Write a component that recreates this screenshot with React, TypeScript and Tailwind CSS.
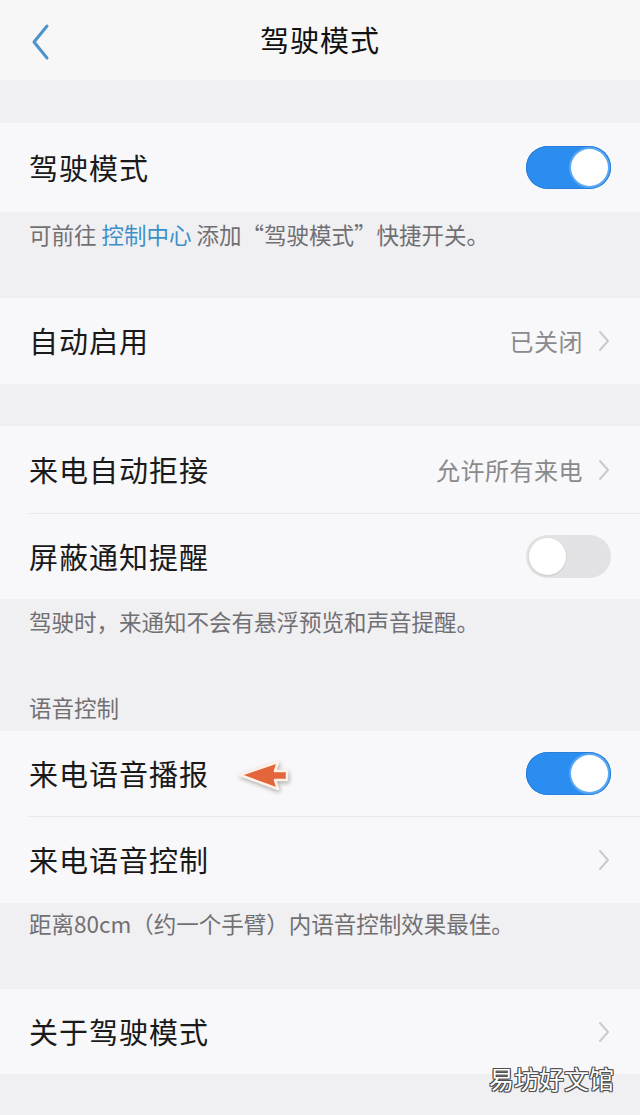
import React from 'react'

const font = { fontFamily: '"Noto Sans CJK SC", "Noto Sans", sans-serif' }

function Toggle({ on }: { on: boolean }) {
  return on ? (
    <div className="w-[85px] h-[43px] rounded-full bg-[#2c8df0] flex items-center justify-end pr-[3px] shadow-[inset_0_0_0_1px_#2a7fd6]">
      <div className="w-[37px] h-[37px] rounded-full bg-white shadow-[0_0_0_2px_#5aa8f2]" />
    </div>
  ) : (
    <div className="w-[85px] h-[43px] rounded-full bg-[#e2e2e4] flex items-center justify-start pl-[3px]">
      <div className="w-[37px] h-[37px] rounded-full bg-white shadow-[0_1px_2px_rgba(0,0,0,0.12)]" />
    </div>
  )
}

function Chevron() {
  return (
    <svg width="14" height="24" viewBox="0 0 14 24" className="ml-[14px]">
      <path d="M3 3 L11 12 L3 21" fill="none" stroke="#cacacc" strokeWidth="2" strokeLinecap="round" strokeLinejoin="round" />
    </svg>
  )
}

function Row({
  label,
  h,
  value,
  chevron,
  toggle,
  children,
}: {
  label: string
  h: string
  value?: string
  chevron?: boolean
  toggle?: boolean
  children?: React.ReactNode
}) {
  return (
    <div className={`relative flex items-center justify-between pl-[29px] pr-[29px] bg-[#f8f7f9] ${h}`}>
      <div className="flex items-center">
        <span className="text-[29px] text-[#1a1a1a] tracking-[1px]">{label}</span>
        {children}
      </div>
      <div className="flex items-center">
        {value && <span className="text-[24px] text-[#8a8a8c] tracking-[0.5px]">{value}</span>}
        {chevron && <Chevron />}
        {toggle !== undefined && <Toggle on={toggle} />}
      </div>
    </div>
  )
}

function Divider() {
  return (
    <div className="bg-[#f8f7f9] pl-[29px]">
      <div className="h-px bg-[#e8e8ea]" />
    </div>
  )
}

// red annotation arrow drawn over the screenshot
function Arrow() {
  return (
    <svg width="56" height="36" viewBox="0 0 56 36" className="ml-[28px] mt-[4px] drop-shadow-[1px_2px_2px_rgba(0,0,0,0.3)]">
      <path
        d="M3 17 L41 4 L38 13 L50 13 L50 22 L38 22 L41 31 Z"
        fill="#e3653c"
        stroke="#fff1e8"
        strokeWidth="2.5"
        strokeLinejoin="round"
      />
    </svg>
  )
}

export default function App() {
  return (
    <div className="relative w-[640px] h-[1115px] bg-[#f0eff2] overflow-hidden" style={font}>
      {/* header */}
      <div className="relative h-[80px] bg-[#f7f7f7] flex items-center justify-center">
        <svg width="24" height="40" viewBox="0 0 24 40" className="absolute left-[28px] top-[22px]">
          <path d="M19 4 L6 20 L19 36" fill="none" stroke="#4b95cc" strokeWidth="3" strokeLinecap="round" strokeLinejoin="round" />
        </svg>
        <span className="text-[29px] text-[#111] tracking-[1px]">驾驶模式</span>
      </div>

      <div className="h-[43px]" />

      <Row label="驾驶模式" h="h-[89px]" toggle={true} />
      <div className="h-[86px] pl-[29px] pt-[6px] text-[22.5px] text-[#707072]">
        可前往 <span className="text-[#3d8fc8]">控制中心</span> 添加“驾驶模式”快捷开关。
      </div>

      <Row label="自动启用" h="h-[86px]" value="已关闭" chevron />

      <div className="h-[42px]" />

      <Row label="来电自动拒接" h="h-[87px]" value="允许所有来电" chevron />
      <Divider />
      <Row label="屏蔽通知提醒" h="h-[85px]" toggle={false} />
      <div className="h-[62px] pl-[29px] pt-[6px] text-[22.5px] text-[#707072]">
        驾驶时，来通知不会有悬浮预览和声音提醒。
      </div>
      <div className="h-[70px] pl-[29px] flex items-end pb-[6px] text-[22.5px] text-[#707072]">语音控制</div>

      <Row label="来电语音播报" h="h-[85px]" toggle={true}>
        <Arrow />
      </Row>
      <Divider />
      <Row label="来电语音控制" h="h-[86px]" chevron />
      <div className="h-[86px] pl-[29px] pt-[4px] text-[22.5px] text-[#707072]">
        距离80cm（约一个手臂）内语音控制效果最佳。
      </div>

      <Row label="关于驾驶模式" h="h-[85px]" chevron />

      {/* watermark */}
      <div
        className="absolute right-[26px] bottom-[18px] text-[25px] text-white"
        style={{ textShadow: '0 0 1px #333, 0 0 1px #333, 1px 1px 0 #555, -1px -1px 0 #555, 1px -1px 0 #555, -1px 1px 0 #555' }}
      >
        易坊好文馆
      </div>
    </div>
  )
}
